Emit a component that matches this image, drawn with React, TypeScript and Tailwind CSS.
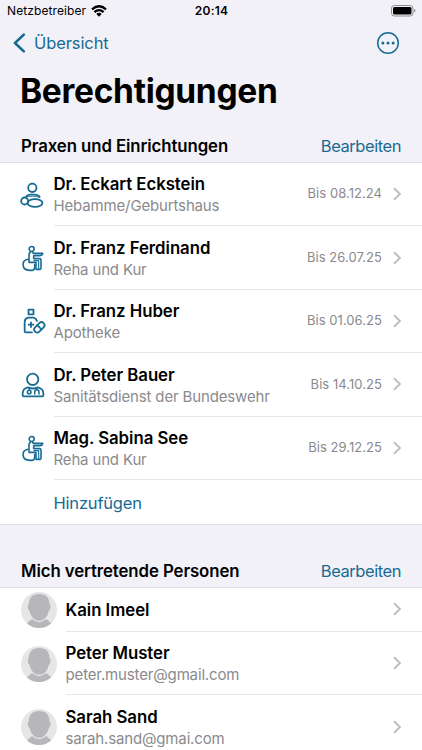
import type { ReactNode } from "react";

function LineIcon({ children }: { children: ReactNode }) {
  return (
    <svg
      viewBox="0 0 78 84"
      className="h-[28px] w-[26px] shrink-0"
      fill="none"
      stroke="#176b93"
      strokeWidth="5.4"
      strokeLinecap="round"
      strokeLinejoin="round"
    >
      {children}
    </svg>
  );
}

const MidwifeIcon = () => (
  <LineIcon>
    <circle cx="37" cy="20.5" r="12.5" />
    <path d="M19 47C22 39 29 41 37 41S53 39 59 48" />
    <path d="M20 47Q38 44 58 48" strokeWidth="2.5" />
    <circle cx="14" cy="60" r="10.5" />
    <ellipse cx="45" cy="66" rx="22.5" ry="11.5" />
  </LineIcon>
);

const RehaIcon = () => (
  <LineIcon>
    <g strokeWidth="4.8">
      <circle cx="35" cy="15" r="7.5" />
      <path d="M31 25Q27 27 27 32V55H48V76H60Q63 76 63 72V49Q63 44 58 44H41V36" />
      <path d="M38 26L42 28H68Q67 35 60 35H41" />
      <path d="M42 50H56V74" strokeWidth="3.4" />
      <path d="M24 46Q9 49 9 62Q10 79 30 79H38Q44 78 44 70V62" />
    </g>
  </LineIcon>
);

const PharmacyIcon = () => (
  <LineIcon>
    <path d="M25.5 8H40.5V22H25.5ZM36 76H17Q14 76 14 73V45Q14 35 24 32H41Q49 34 51 42M33 46V60M26 53H40" />
    <g transform="rotate(-45 58 61)">
      <rect x="40" y="52" width="36" height="18" rx="9" />
      <path d="M58 52V70" />
    </g>
  </LineIcon>
);

const DoctorIcon = () => (
  <LineIcon>
    <circle cx="38" cy="25" r="17" />
    <path d="M24 49Q8 53 8 67V73Q8 76 11 76H67Q70 76 70 73V67Q70 53 53 49Q39 56 24 49Z" />
    <path d="M28 51V56M50 51V55M44 69V63Q44 56 50.5 56T57 63V69" strokeWidth="4.6" />
    <circle cx="27.5" cy="63" r="5.5" strokeWidth="4.6" />
  </LineIcon>
);

const Chevron = () => (
  <svg
    viewBox="0 0 8 14"
    className="h-[14px] w-[8px] shrink-0"
    fill="none"
    stroke="#bdbdc1"
    strokeWidth="1.9"
    strokeLinejoin="miter"
  >
    <path d="M1 1.2 7 7 1 12.8" />
  </svg>
);

const Avatar = () => (
  <svg viewBox="0 0 108 108" className="size-[36px] shrink-0">
    <defs>
      <clipPath id="avatar-disc">
        <circle cx="54" cy="54" r="54" />
      </clipPath>
    </defs>
    <circle cx="54" cy="54" r="54" fill="#e6e6e8" />
    <g clipPath="url(#avatar-disc)" fill="#b7b7b9">
      <path d="M15 97L33 81Q54 100 76 81L94 97V110H15Z" />
      <path d="M54.500 6C75 6 86 18 85.500 36Q90 38 88.500 47Q87 55 83.500 56C79 76 68 86 54.500 86S30 76 25.500 56Q22 55 20.500 47Q19 38 23.500 36C23 18 34 6 54.500 6Z" />
    </g>
  </svg>
);

const practices = [
  { name: "Dr. Eckart Eckstein", kind: "Hebamme/Geburtshaus", until: "Bis 08.12.24", Icon: MidwifeIcon },
  { name: "Dr. Franz Ferdinand", kind: "Reha und Kur", until: "Bis 26.07.25", Icon: RehaIcon },
  { name: "Dr. Franz Huber", kind: "Apotheke", until: "Bis 01.06.25", Icon: PharmacyIcon },
  { name: "Dr. Peter Bauer", kind: "Sanitätsdienst der Bundeswehr", until: "Bis 14.10.25", Icon: DoctorIcon },
  { name: "Mag. Sabina See", kind: "Reha und Kur", until: "Bis 29.12.25", Icon: RehaIcon },
];

const people = [
  { name: "Kain Imeel", mail: "" },
  { name: "Peter Muster", mail: "peter.muster@gmail.com" },
  { name: "Sarah Sand", mail: "sarah.sand@gmai.com" },
];

function SectionHeader({ title }: { title: string }) {
  return (
    <div className="flex items-baseline justify-between pr-[21px] pl-[21px] leading-[22px]">
      <h2 className="text-[16.8px] font-semibold tracking-[-0.08px]">{title}</h2>
      <button className="text-[16.5px] leading-[22px] tracking-[-0.45px] text-[#176b93]">Bearbeiten</button>
    </div>
  );
}

function Labels({ name, detail }: { name: string; detail: string }) {
  return (
    <div className={`flex min-w-0 flex-1 flex-col whitespace-nowrap ${detail ? "pt-[1.4px]" : "pt-px"}`}>
      <span className="text-[16.8px] leading-[22px] font-semibold tracking-[-0.04px]">{name}</span>
      {detail && <span className="text-[15px] leading-[21px] tracking-[-0.15px] text-[#8a8a8e]">{detail}</span>}
    </div>
  );
}

export default function App() {
  return (
    <div className="flex h-[750px] w-full flex-col overflow-hidden bg-[#f2f1f8] font-['Inter','Liberation_Sans',sans-serif] text-black">
      <div className="grid h-[22px] shrink-0 grid-cols-3 items-center pr-[6px] pl-[7px] text-[12px]">
        <div className="flex items-center gap-[5px]">
          <span className="tracking-[0.1px]">Netzbetreiber</span>
          <svg viewBox="0 0 16 12" className="h-[12px] w-[16px]" fill="none" stroke="#000" strokeWidth="2.3">
            <path d="M1 4.3Q8-1.8 15 4.3M3.4 7.2Q8 3 12.6 7.2" />
            <path d="M5.3 9Q8 6.7 10.7 9L8 11.7Z" fill="#000" stroke="none" />
          </svg>
        </div>
        <span className="text-center font-semibold tracking-[0.2px]">20:14</span>
        <svg viewBox="0 0 25 12" className="h-[12px] w-[25px] justify-self-end">
          <rect x="0.5" y="0.5" width="21.5" height="10.5" rx="2.8" fill="none" stroke="#8c8c90" />
          <rect x="2" y="2" width="18.5" height="7.5" rx="1.5" />
          <path d="M23.2 4Q24.6 4.6 24.6 5.8T23.2 7.6Z" fill="#8c8c90" />
        </svg>
      </div>

      <div className="flex h-[42px] shrink-0 items-center justify-between pr-[22px] pl-[13px] text-[#176b93]">
        <button className="flex items-center gap-[8px] text-[16.5px] tracking-[-0.1px]">
          <svg viewBox="0 0 13 20" className="h-[20px] w-[13px]" fill="none" stroke="currentColor" strokeWidth="2.6" strokeLinecap="round" strokeLinejoin="round">
            <path d="M10.8 1.6 2 10l8.8 8.4" />
          </svg>
          Übersicht
        </button>
        <svg viewBox="0 0 24 24" className="size-[24px]" fill="currentColor">
          <circle cx="12" cy="12" r="10.3" fill="none" stroke="currentColor" strokeWidth="1.5" />
          <circle cx="6.9" cy="12" r="1.5" />
          <circle cx="12" cy="12" r="1.5" />
          <circle cx="17.1" cy="12" r="1.5" />
        </svg>
      </div>

      <h1 className="mt-[5px] h-[66px] shrink-0 pl-[20px] text-[33.5px] leading-[44px] font-bold tracking-[-0.3px]">
        Berechtigungen
      </h1>
      <SectionHeader title="Praxen und Einrichtungen" />

      <div className="mt-[5px] shrink-0 border-y border-[#dddde3] bg-white">
        {practices.map(({ name, kind, until, Icon }) => (
          <div key={name} className="flex h-[63.4px] items-center pl-[20px]">
            <Icon />
            <div className="ml-[7.5px] flex h-full flex-1 items-center border-b border-[#e6e6e8] pr-[21px]">
              <Labels name={name} detail={kind} />
              <span className="mr-[11px] text-[13px] tracking-[0.05px] text-[#8a8a8e]">{until}</span>
              <Chevron />
            </div>
          </div>
        ))}
        <button className="flex h-[44px] items-center pt-[2px] pl-[53.5px] text-[16.5px] tracking-[-0.2px] text-[#176b93]">
          Hinzufügen
        </button>
      </div>

      <div className="h-[35px] shrink-0" />
      <SectionHeader title="Mich vertretende Personen" />

      <div className="mt-[5px] shrink-0 border-t border-[#dddde3] bg-white">
        {people.map(({ name, mail }) => (
          <div key={name} className={`flex items-center pl-[21px] ${mail ? "h-[63.5px]" : "h-[44px]"}`}>
            <Avatar />
            <div className="ml-[8.5px] flex h-full flex-1 items-center border-b border-[#e6e6e8] pr-[21px]">
              <Labels name={name} detail={mail} />
              <Chevron />
            </div>
          </div>
        ))}
      </div>
    </div>
  );
}
